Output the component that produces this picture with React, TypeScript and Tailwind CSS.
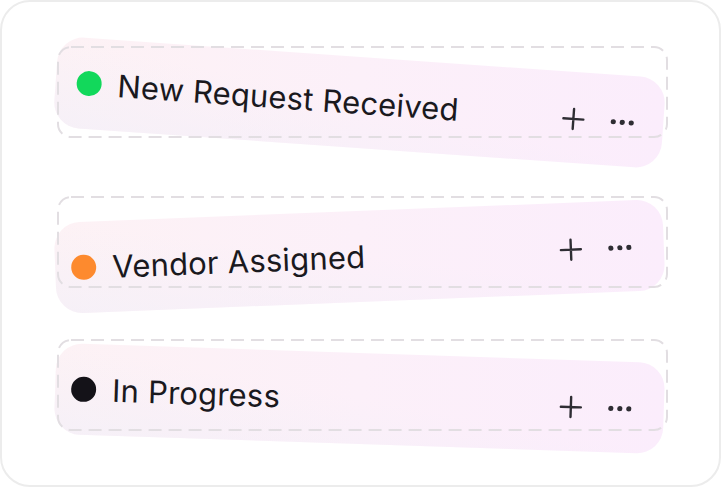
import React from 'react';

type Stage = {
  label: string;
  dot: string;
  tilt: string;
  cardTop: string;
  gapTop: string;
  pad: string;
};

const stages: Stage[] = [
  { label: 'New Request Received', dot: 'bg-[#12d85b]', tilt: 'rotate-[4deg]', cardTop: 'top-[11px]', gapTop: 'mt-0', pad: 'pl-[21px] pr-[29px]' },
  { label: 'Vendor Assigned', dot: 'bg-[#fd8a2e]', tilt: '-rotate-[2.25deg]', cardTop: 'top-[15px]', gapTop: 'mt-[58px]', pad: 'pl-[16px] pr-[32px]' },
  { label: 'In Progress', dot: 'bg-[#141218]', tilt: 'rotate-[1.9deg]', cardTop: 'top-[14px]', gapTop: 'mt-[51px]', pad: 'pl-[16px] pr-[32px]' },
];

function PlusIcon() {
  return (
    <svg width="24" height="24" viewBox="0 0 24 24" fill="none" stroke="#2e2d33" strokeWidth="2.4" strokeLinecap="round">
      <path d="M12 2v20M2 12h20" />
    </svg>
  );
}

function MoreIcon() {
  return (
    <svg width="24" height="6" viewBox="0 0 24 6" fill="#2e2d33">
      <circle cx="3" cy="3" r="2.6" />
      <circle cx="12" cy="3" r="2.6" />
      <circle cx="21" cy="3" r="2.6" />
    </svg>
  );
}

function StageSlot({ stage }: { stage: Stage }) {
  return (
    <div className={`relative h-[92px] w-[611px] shrink-0 ${stage.gapTop}`}>
      <div
        className={`absolute left-[-2px] ${stage.cardTop} flex h-[91px] w-[609px] items-center rounded-[26px] bg-gradient-to-r from-[#fdf2f5] via-[#fcf0f9] to-[#fbedfc] ${stage.pad} ${stage.tilt}`}
      >
        <div className="pointer-events-none absolute inset-0 rounded-[26px] bg-gradient-to-tr from-[#f1eff9] via-transparent to-transparent opacity-60" />
        <span className={`relative h-[25px] w-[25px] shrink-0 rounded-full ${stage.dot}`} />
        <span className="relative ml-4 text-[31px] leading-none tracking-[0.2px] text-[#1a191e]">{stage.label}</span>
        <div className="relative ml-auto flex items-center gap-[25px] pt-[2px]">
          <PlusIcon />
          <MoreIcon />
        </div>
      </div>
      <svg className="pointer-events-none absolute inset-0" width="611" height="92">
        <rect x="1" y="1" width="609" height="90" rx="13" fill="none" stroke="#e2dee2" strokeWidth="2" strokeDasharray="13 7" />
      </svg>
    </div>
  );
}

export default function App() {
  return (
    <div className="h-[487px] w-[721px] bg-white" style={{ fontFamily: 'Inter, "Noto Sans", sans-serif' }}>
      <div className="flex h-full flex-col rounded-[30px] border-2 border-[#ececec] bg-white pl-[55px] pt-[44px]">
        {stages.map(s => (
          <StageSlot key={s.label} stage={s} />
        ))}
      </div>
    </div>
  );
}
